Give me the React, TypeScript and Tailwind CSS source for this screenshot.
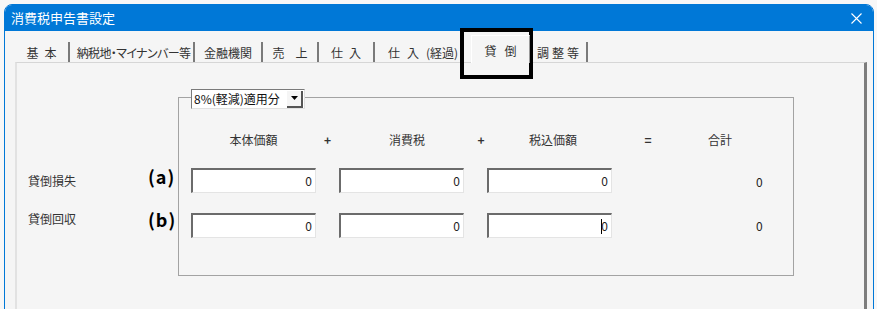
import { JSX } from "react";

const font = "font-['Noto_Sans_CJK_JP','Noto_Sans',sans-serif]";

type Tab = { parts: string[]; w: string; gap: string; noSep?: boolean };

const tabs: Tab[] = [
  { parts: ["基", "本"], w: "w-[55px]", gap: "gap-[6px]" },
  { parts: ["納税地・マイナンバー等"], w: "w-[125px]", gap: "gap-0" },
  { parts: ["金融機関"], w: "w-[68px]", gap: "gap-0" },
  { parts: ["売", "上"], w: "w-[56px]", gap: "gap-[11px]" },
  { parts: ["仕", "入"], w: "w-[56px]", gap: "gap-[6px]" },
  { parts: ["仕", "入", "(経過)"], w: "w-[96px]", gap: "gap-[7px]", noSep: true },
];

const NumBox = ({ caret = false }: { caret?: boolean }): JSX.Element => (
  <div className="w-[125px] h-[25px] bg-white border-t-2 border-l-2 border-t-[#6b6b6b] border-l-[#6b6b6b] border-b border-r border-b-[#e4e4e4] border-r-[#e4e4e4] flex items-center justify-end pr-[3px] text-[12px] text-[#1e1e1e]">
    {caret && <span className="w-px h-[15px] bg-black mr-[-1px]" />}
    <span>0</span>
  </div>
);

const App = (): JSX.Element => {
  return (
    <div className={`relative w-[877px] h-[309px] overflow-hidden bg-[#f7f7f7] pt-[4px] pl-[4px] ${font}`}>
      <div className="w-[870px] h-[330px] border border-[#0078d7] rounded-t-[8px] bg-[#f5f5f5] flex flex-col overflow-hidden">
        {/* title bar */}
        <div className="h-[26px] shrink-0 bg-[#0078d7] flex items-center justify-between pl-[6px] pr-[10px] text-white text-[13px]">
          <span>消費税申告書設定</span>
          <svg width="11" height="11" viewBox="0 0 11 11" className="mr-[1px]">
            <path d="M0.5 0.5 L10.5 10.5 M10.5 0.5 L0.5 10.5" stroke="white" strokeWidth="1.1" />
          </svg>
        </div>

        <div className="pl-[10px] pr-[6px] flex flex-col">
          {/* tab row */}
          <div className="h-[31px] flex items-end text-[12px] text-[#333] whitespace-nowrap [font-feature-settings:'palt']">
            {tabs.map((t) => (
              <div
                key={t.parts.join("")}
                className={`${t.w} h-[20px] shrink-0 flex items-center justify-center ${t.noSep ? "" : "border-r-2 border-r-[#7a7a7a]"}`}
              >
                <span className={`mt-[1px] flex ${t.gap} ${t.parts[0].length > 6 ? "tracking-[-0.6px] ml-[4px]" : ""}`}>
                  {t.parts.map((p) => (
                    <span key={p}>{p}</span>
                  ))}
                </span>
              </div>
            ))}
            <div className="w-[59px] h-[28px] shrink-0 mb-[-1px] bg-[#f5f5f5] border-l border-t border-l-white border-t-white border-r border-r-[#9a9a9a] flex items-start justify-center gap-[8px] pt-[6px] relative z-10">
              <span>貸</span>
              <span>倒</span>
            </div>
            <div className="w-[58px] h-[20px] shrink-0 flex items-center justify-center gap-[3px] border-r-2 border-r-[#7a7a7a]">
              <span className="mt-[1px]">調</span>
              <span className="mt-[1px]">整</span>
              <span className="mt-[1px]">等</span>
            </div>
          </div>

          {/* panel */}
          <div className="w-[852px] h-[280px] border-t border-t-[#d6d6d6] border-l-2 border-l-[#e2e2e2] border-r-[3px] border-r-[#7d7d7d] flex pl-[11px] text-[12px] text-[#333]">
            <div className="mt-[34px] w-[150px] flex">
              <div className="flex-1 flex flex-col pt-[76px]">
                <span className="leading-[16px]">貸倒損失</span>
                <span className="leading-[16px] mt-[22px]">貸倒回収</span>
              </div>
              <div className="w-[30px] pr-[2px] flex flex-col pt-[67px] text-[18px] font-bold text-black">
                <span className="leading-[24px] tracking-[1px]">(a)</span>
                <span className="leading-[24px] tracking-[1px] mt-[19px]">(b)</span>
              </div>
            </div>

            <div className="relative mt-[34px] w-[616px] h-[179px] border border-[#a3a3a3] pl-[12px] flex flex-col">
              {/* combo box on the frame */}
              <div className="absolute left-[12px] -top-[9px] w-[114px] h-[20px] bg-white border-t border-l border-t-[#7a7a7a] border-l-[#7a7a7a] border-b border-r border-b-[#e0e0e0] border-r-[#e0e0e0] flex items-center">
                <span className="pl-[2px] flex-1 text-[12px] text-[#111] leading-none">8%(軽減)適用分</span>
                <div className="w-[16px] h-[17px] mr-[1px] bg-[#f5f5f5] border-r-2 border-b-2 border-r-[#555] border-b-[#555] flex items-center justify-center">
                  <svg width="7" height="4" viewBox="0 0 7 4">
                    <path d="M0 0 L7 0 L3.5 4 Z" fill="black" />
                  </svg>
                </div>
              </div>

              <div className="mt-[34px] h-[16px] flex items-center leading-[16px]">
                <span className="w-[125px] text-center">本体価額</span>
                <span className="w-[23px] text-center font-bold">+</span>
                <span className="w-[136px] text-center">消費税</span>
                <span className="w-[12px] text-center font-bold">+</span>
                <span className="w-[132px] text-center">税込価額</span>
                <span className="w-[58px] text-center font-bold">=</span>
                <span className="w-[86px] text-center">合計</span>
              </div>

              <div className="mt-[20px] flex items-center gap-[23px]">
                <NumBox />
                <NumBox />
                <NumBox />
                <span className="ml-[121px] mt-[3px] text-[#222]">0</span>
              </div>
              <div className="mt-[20px] flex items-center gap-[23px]">
                <NumBox />
                <NumBox />
                <NumBox caret />
                <span className="ml-[121px] mt-[1px] text-[#222]">0</span>
              </div>
            </div>
          </div>
        </div>
      </div>

      {/* annotation frame around the selected tab */}
      <div className="absolute left-[460px] top-[28px] w-[73px] h-[51px] border-[4px] border-black" />
    </div>
  );
};

export default App;
